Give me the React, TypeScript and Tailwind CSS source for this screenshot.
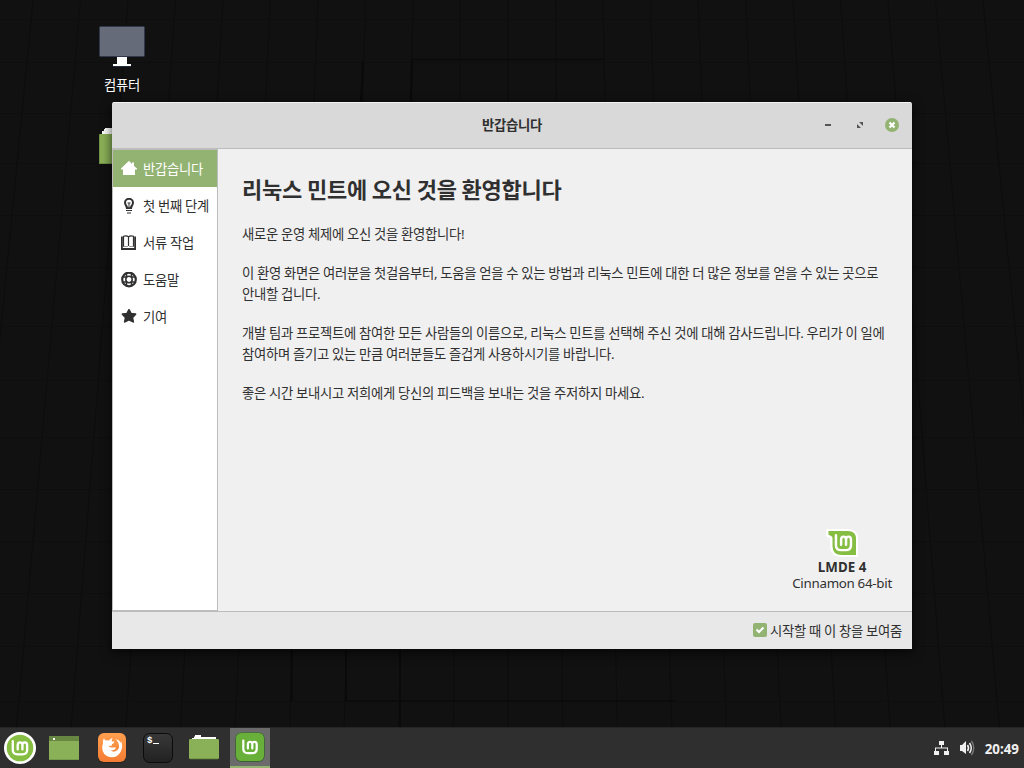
import React from "react";

const nav = [
  { label: "반갑습니다", icon: "home" },
  { label: "첫 번째 단계", icon: "bulb" },
  { label: "서류 작업", icon: "book" },
  { label: "도움말", icon: "help" },
  { label: "기여", icon: "star" },
];

const COLUMNS = Array.from({ length: 23 }, (_, i) => i - 11);
const ROWS = [19, 62, 113, 163, 215, 267, 326, 380, 437, 489, 541, 593, 646, 701];

function Wallpaper() {
  return (
    <svg className="absolute inset-0" width="1024" height="768" fill="none">
      <rect width="1024" height="768" fill="#111111" />
      {COLUMNS.map((n) => (
        <path key={n} d={`M${508 + n * 47.5} 0L${508 + n * 54.6} 727`} stroke="#0d0d0d" />
      ))}
      {ROWS.map((y) => (
        <path key={y} d={`M0 ${y + 0.5}H1024`} stroke="#0e0e0e" />
      ))}
      <path d="M363 62L361 102M412 60L411 102M291.500 650V701M346 650V701M400 650V727" stroke="#0a0a0a" strokeWidth="2" />
      <path d="M411 59.500H604M346 701H675" stroke="#0b0b0b" strokeWidth="1.500" />
    </svg>
  );
}

function LmMark() {
  return (
    <path
      d="M1.300 1.200V10.300Q1.300 14.800 5.800 14.800H10.200Q14.700 14.800 14.700 10.300V5.200Q14.700 2.400 12.500 2.400T10.300 5.200V9.800M10.300 5.200Q10.300 2.400 8.100 2.400T5.900 5.200V9.800"
      stroke="#fff"
      strokeWidth="2.200"
      strokeLinecap="round"
      fill="none"
    />
  );
}

function NavIcon({ name }: { name: string }) {
  if (name === "home")
    return (
      <svg width="16" height="16" fill="#fff">
        <path d="M7.500 .2L0 7.500V8.500H2V14H14V8.500H16V7.500L13 5V1.500H11V3L8.500 .2Z" />
      </svg>
    );
  if (name === "bulb")
    return (
      <svg width="16" height="16" fill="#303030">
        <path fillRule="evenodd" d="M8 -.2A5 5 0 0 0 3 4.800C3 7 5 8.500 5 11H11C11 8.500 13 7 13 4.800A5 5 0 0 0 8 -.2ZM8 1.800A3 3 0 0 1 11 4.800C11 6.500 9.200 7.500 9 9.300H8.500V5.500H9.500V4.500H6.500V5.500H7.500V9.300H7C6.800 7.500 5 6.500 5 4.800A3 3 0 0 1 8 1.800Z" />
        <path d="M5 12H11V13H5ZM6 14.500H10V15.500H6Z" />
      </svg>
    );
  if (name === "book")
    return (
      <svg width="16" height="16">
        <path d="M.9 1.500V14H14.100V1.500" stroke="#303030" strokeWidth="1.800" fill="none" />
        <path d="M2.500 12V1.200Q5.500 .2 7.500 1.700Q9.500 .2 12.500 1.200V12M7.500 1.700V11" stroke="#303030" strokeWidth="1.200" fill="none" />
        <path d="M2.500 11.500H6.800M8.200 11.500H12.500" stroke="#999" />
      </svg>
    );
  if (name === "help")
    return (
      <svg width="16" height="16" fill="none" stroke="#303030">
        <circle cx="8" cy="7.500" r="6.800" strokeWidth="2.200" />
        <circle cx="8" cy="7.500" r="3.200" strokeWidth="1.500" />
        <path d="M5.500 .8V6M10.500 .8V6M5.500 9V14.200M10.500 9V14.200M1.300 5H6M1.300 10H6M10 5H14.700M10 10H14.700" strokeWidth="1.500" />
      </svg>
    );
  return (
    <svg width="16" height="16" fill="#303030" stroke="#303030" strokeWidth="1.800" strokeLinejoin="round">
      <path d="M8 .8L10 4.700L14.500 5.200L11.300 8.500L12.200 12.800L8 10.800L3.800 12.800L4.700 8.500L1.500 5.200L6 4.700Z" />
    </svg>
  );
}

function Folder() {
  return (
    <svg className="mb-[2px]" width="30" height="25">
      <path d="M3 7V3H5V1.500H6V0H12V2H27V7Z" fill="#fff" />
      <path d="M0 5.500Q0 4 1 4H29Q30 4 30 5.500V23Q30 24 29 24H1Q0 24 0 23Z" fill="#8bb158" />
      <path d="M1 24H29" stroke="#5c7a35" strokeWidth=".8" />
    </svg>
  );
}

function Taskbar() {
  return (
    <div className="relative flex h-[41px] items-stretch border-t border-[#252525] bg-[#2f2f2f]">
      <div className="flex w-10 items-center justify-center">
        <svg width="32" height="32">
          <circle cx="16" cy="16" r="16" fill="#fff" />
          <circle cx="16" cy="16" r="13.300" fill="#86be43" />
          <g transform="translate(7.400 8) scale(1.070 .97)"><LmMark /></g>
        </svg>
      </div>
      <div className="ml-[9px] flex w-[30px] items-center justify-center">
        <svg width="30" height="24">
          <rect width="30" height="24" fill="#8bb158" />
          <rect width="30" height="5" fill="#668642" />
          <rect x="4" y="2" width="2" height="2" fill="#fff" />
          <path d="M0 23.500H30" stroke="#789b4b" />
        </svg>
      </div>
      <div className="ml-[17px] flex w-8 items-center justify-center">
        <svg width="32" height="32">
          <defs>
            <linearGradient id="fox" x2="0" y2="1"><stop stopColor="#ffa04f" /><stop offset="1" stopColor="#f47c33" /></linearGradient>
          </defs>
          <rect x="2" y="2" width="28" height="29" rx="6" fill="#232323" />
          <rect x="2" y="1" width="28" height="29" rx="6" fill="url(#fox)" />
          <path d="M8 6Q8.500 8.300 10 8.500Q12 8 13 8.500Q14 6.500 16.500 6Q15 8 16 9.500H18.500Q18.500 11 16 12.200L15.500 14L12.500 13.700Q13.500 16 17 15.500Q19 15 20 16Q18 19 14.500 18.500Q18 21 21.500 18Q24 15.500 22.500 11.500Q21.500 8.500 19.500 7Q24 8 24.500 11L25 9Q27.500 15 24.500 20Q21.500 25.500 15.500 25.300Q9 25 6.700 19Q5.300 15 7 11.500Q6.500 8.500 8 6Z" fill="#fff" />
        </svg>
      </div>
      <div className="ml-[14px] flex w-8 items-center justify-center">
        <svg width="32" height="32">
          <defs><linearGradient id="term" x2="0" y2="1"><stop stopColor="#383838" /><stop offset="1" stopColor="#222" /></linearGradient></defs>
          <rect x="1.500" y="1.500" width="29" height="29" rx="6" fill="url(#term)" stroke="#0b0b0b" />
          <text x="5" y="10.500" fill="#fff" fontSize="9" fontWeight="700" fontFamily="Liberation Mono, monospace">$</text>
          <path d="M11 11.500H17" stroke="#fff" />
        </svg>
      </div>
      <div className="ml-[15px] flex w-[30px] items-center justify-center">
        <Folder />
      </div>
      <div className="ml-[11px] flex w-10 items-center justify-center border-b-2 border-[#92b372] bg-[#6b6b6b]">
        <svg width="32" height="32">
          <rect x="1.500" y="2" width="29" height="29" rx="6" fill="#4d4d4d" />
          <rect x="1.500" y="1.500" width="29" height="29" rx="6" fill="#2f6f1c" />
          <rect x="2" y="2" width="28" height="28" rx="5.500" fill="#69b03a" />
          <g transform="translate(8 8.500) scale(1 .92)"><LmMark /></g>
        </svg>
      </div>
      <div className="ml-auto flex items-center pr-[5px]">
        <svg width="16" height="16" fill="#f0f0f0">
          <path d="M5 1H10V5H8V7.500H14V11H15V15H10V11H13V8.500H2V11H5V15H0V11H1V7.500H7V5H5Z" />
        </svg>
        <svg className="ml-[9px]" width="17" height="16" fill="none">
          <path d="M1 5H3L7 1V14L3 11H1Z" fill="#f0f0f0" />
          <path d="M8.500 5Q10.500 8 8.500 11" stroke="#f0f0f0" strokeWidth="1.600" />
          <path d="M10.500 3Q14 8 10.500 13" stroke="#f0f0f0" strokeWidth="1.500" />
          <path d="M12.500 1Q17 8 12.500 15" stroke="#777" strokeWidth="1.400" />
        </svg>
        <span className="ml-[9px] pt-[2px] text-[13.33px] font-bold leading-[18px] tracking-normal text-[#f0f0f0]">20:49</span>
      </div>
    </div>
  );
}

export default function App() {
  return (
    <div className="relative flex h-[768px] w-[1024px] flex-col overflow-hidden bg-[#111] font-['Noto_Sans','Noto_Sans_CJK_KR',sans-serif] text-[13.33px] tracking-[-0.265px] text-[#303030] [word-spacing:-0.2px]">
      <Wallpaper />

      <div className="absolute left-[99px] top-[26px] flex w-[46px] flex-col items-center">
        <svg width="46" height="42">
          <rect x=".5" y=".5" width="45" height="30" rx="1" fill="#656b79" stroke="#30394b" />
          <path d="M18 31H28V38H32V40H14V38H18Z" fill="#fff" />
          <path d="M14 40.500H32" stroke="#222b3b" />
        </svg>
        <span className="mt-[7px] whitespace-nowrap leading-5 text-white">컴퓨터</span>
      </div>
      <svg className="absolute left-[99px] top-[127px]" width="46" height="38">
        <path d="M3 8V4H5V2H6V1H18V3H43V8Z" fill="#fff" />
        <rect y="7" width="46" height="30" rx="1" fill="#8bb158" />
        <path d="M.5 8V36.500H45.500V8" fill="none" stroke="#719346" />
      </svg>

      <div className="absolute left-[112px] top-[102px] flex h-[547px] w-[800px] flex-col overflow-hidden rounded-t-[3px] bg-[#f0f0f0] shadow-[0_3px_12px_rgba(0,0,0,0.7)]">
        <div className="grid h-[47px] shrink-0 grid-cols-[1fr_auto_1fr] items-center border-b border-t border-b-[#bcbcbc] border-t-[#f2f2f2] bg-[#d9d9d9] pb-[2px]">
          <span />
          <span className="pt-[2px] font-bold">반갑습니다</span>
          <div className="flex items-center justify-end pr-[13px]">
            <svg width="74" height="14">
              <path d="M0 7H6" stroke="#555" strokeWidth="2" />
              <path d="M34 4H38V8ZM32 6V10H36Z" fill="#555" />
              <circle cx="67" cy="7" r="7" fill="#92b372" />
              <path d="M64.500 4.500L69.500 9.500M69.500 4.500L64.500 9.500" stroke="#fff" strokeWidth="2.200" />
            </svg>
          </div>
        </div>
        <div className="flex min-h-0 flex-1">
          <div className="w-[106px] shrink-0 border border-[#bcbcbc] bg-white">
            {nav.map((n, i) => (
              <div key={n.label} className={i === 0 ? "flex h-[37px] items-center gap-[6px] bg-[#92b372] pl-2 text-white" : "flex h-[37px] items-center gap-[6px] pl-2"}>
                <span className="flex w-4 shrink-0"><NavIcon name={n.icon} /></span>
                <span className="whitespace-nowrap pt-[3px]">{n.label}</span>
              </div>
            ))}
          </div>
          <div className="flex flex-1 flex-col px-6 pt-6">
            <h1 className="whitespace-nowrap text-[22px] font-bold leading-8 tracking-[-0.24px] [word-spacing:-0.6px]">리눅스 민트에 오신 것을 환영합니다</h1>
            <div className="mt-[19px] flex flex-col gap-[18px] whitespace-nowrap leading-[21px]">
              <p>새로운 운영 체제에 오신 것을 환영합니다!</p>
              <p>이 환영 화면은 여러분을 첫걸음부터, 도움을 얻을 수 있는 방법과 리눅스 민트에 대한 더 많은 정보를 얻을 수 있는 곳으로<br />안내할 겁니다.</p>
              <p>개발 팀과 프로젝트에 참여한 모든 사람들의 이름으로, 리눅스 민트를 선택해 주신 것에 대해 감사드립니다. 우리가 이 일에<br />참여하며 즐기고 있는 만큼 여러분들도 즐겁게 사용하시기를 바랍니다.</p>
              <p>좋은 시간 보내시고 저희에게 당신의 피드백을 보내는 것을 주저하지 마세요.</p>
            </div>
            <div className="-mr-1 mb-5 ml-auto mt-auto flex flex-col items-center leading-4">
              <svg width="32" height="30">
                <path d="M0 0H22Q32 0 32 10V28H16Q4 28 4 17V9Q0 9 0 5Z" fill="#fff" />
                <path d="M2.500 2H22Q30 2 30 10V26H16Q6.500 26 6.500 17V9Q6.500 7 2.500 6Z" fill="#86be43" />
                <g transform="translate(8.500 5) scale(1.120 1.090)"><LmMark /></g>
              </svg>
              <span className="font-bold tracking-[0.1px]">LMDE 4</span>
              <span>Cinnamon 64-bit</span>
            </div>
          </div>
        </div>
        <div className="flex h-[38px] shrink-0 items-center justify-end gap-[3px] border-t border-[#bcbcbc] bg-[#e8e8e8] pr-[10px]">
          <svg className="mb-[2px]" width="14" height="14">
            <rect width="14" height="14" rx="2" fill="#92b372" />
            <path d="M3.500 6.500L6 9L10.500 4.500" stroke="#fff" strokeWidth="2.200" fill="none" />
          </svg>
          <span className="pt-[3px]">시작할 때 이 창을 보여줌</span>
        </div>
      </div>

      <div className="mt-auto"><Taskbar /></div>
    </div>
  );
}
